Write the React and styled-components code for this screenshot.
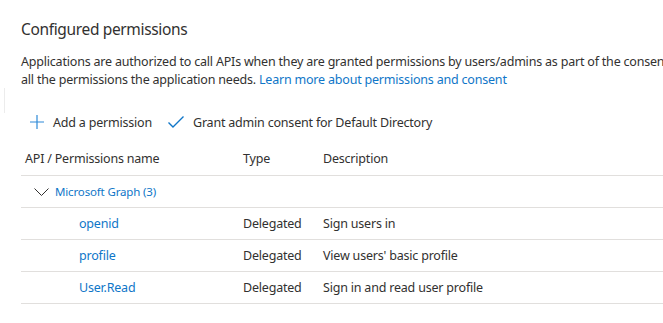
import React from "react";
import styled, { createGlobalStyle } from "styled-components";

const Global = createGlobalStyle`
  html, body { margin: 0; padding: 0; background: #fff; overflow: hidden; }
  *, *::before, *::after { box-sizing: border-box; }
  body { font-family: "Noto Sans", "Open Sans", sans-serif; color: #323130; }
`;

const Page = styled.div`
  position: relative;
  width: 663px;
  height: 323px;
  overflow: hidden;
  padding: 18px 0 0 21px;
`;

const EdgeLine = styled.div`
  position: absolute;
  left: 4px;
  top: 88px;
  width: 1px;
  height: 25px;
  background: #ececec;
`;

const Title = styled.h2`
  margin: 0;
  font-size: 15.5px;
  letter-spacing: -0.35px;
  font-weight: 400;
  line-height: 22px;
  white-space: nowrap;
`;

const Para = styled.p`
  margin: 13px 0 0;
  font-size: 12.5px;
  letter-spacing: -0.2px;
  line-height: 18px;
  white-space: nowrap;
`;

const Link = styled.a`
  color: #0f76c8;
  text-decoration: none;
`;

const Toolbar = styled.div`
  display: flex;
  align-items: center;
  gap: 15px;
  margin: 23px 0 0 8px;
  height: 20px;
`;

const ToolButton = styled.div`
  display: flex;
  align-items: center;
  gap: 8px;
  font-size: 12.5px;
  letter-spacing: -0.2px;
  white-space: nowrap;
`;

const Table = styled.div`
  margin-top: 9px;
  width: 700px;
`;

const Row = styled.div`
  display: grid;
  grid-template-columns: 222px 80px 1fr;
  align-items: center;
  height: ${(p) => p.$h || 32}px;
  border-bottom: 1px solid #e1dfdd;
  font-size: 12.5px;
  letter-spacing: -0.2px;
  white-space: nowrap;
`;

const HeadCell = styled.div`
  padding-left: ${(p) => p.$pad || 0}px;
  font-weight: 400;
`;

const Cell = styled.div`
  padding-left: ${(p) => p.$pad || 0}px;
`;

const NameLink = styled.span`
  color: #0f76c8;
`;

const Group = styled.div`
  display: flex;
  align-items: center;
  gap: 6px;
  padding-left: 13px;
  font-size: 11.5px;
  letter-spacing: -0.15px;
  color: #0f76c8;
`;

const PlusIcon = () => (
  <svg width="16" height="16" viewBox="0 0 16 16">
    <path d="M8 1v14M1 8h14" stroke="#2e8ad8" strokeWidth="1.2" fill="none" />
  </svg>
);

const CheckIcon = () => (
  <svg width="18" height="14" viewBox="0 0 18 14">
    <path d="M1.5 7.5l4.5 4.5L16.5 1.5" stroke="#0f76c8" strokeWidth="1.4" fill="none" />
  </svg>
);

const Chevron = () => (
  <svg width="15" height="8" viewBox="0 0 15 8">
    <path d="M0.5 0.5l7 7 7-7" stroke="#323130" strokeWidth="1" fill="none" />
  </svg>
);

const rows = [
  { name: "openid", type: "Delegated", desc: "Sign users in" },
  { name: "profile", type: "Delegated", desc: "View users' basic profile" },
  { name: "User.Read", type: "Delegated", desc: "Sign in and read user profile" },
];

export default function App() {
  return (
    <>
      <Global />
      <Page>
        <EdgeLine />
        <Title>Configured permissions</Title>
        <Para>
          Applications are authorized to call APIs when they are granted permissions by users/admins as part of the consent process. The list of configured permissions should include
          <br />
          all the permissions the application needs. <Link>Learn more about permissions and consent</Link>
        </Para>
        <Toolbar>
          <ToolButton>
            <PlusIcon />
            Add a permission
          </ToolButton>
          <ToolButton>
            <CheckIcon />
            Grant admin consent for Default Directory
          </ToolButton>
        </Toolbar>
        <Table>
          <Row $h={35}>
            <HeadCell $pad={4}>API / Permissions name</HeadCell>
            <HeadCell>Type</HeadCell>
            <HeadCell>Description</HeadCell>
          </Row>
          <Row>
            <Group>
              <Chevron />
              Microsoft Graph (3)
            </Group>
          </Row>
          {rows.map((r) => (
            <Row key={r.name}>
              <Cell $pad={58}>
                <NameLink>{r.name}</NameLink>
              </Cell>
              <Cell>{r.type}</Cell>
              <Cell>{r.desc}</Cell>
            </Row>
          ))}
        </Table>
      </Page>
    </>
  );
}
